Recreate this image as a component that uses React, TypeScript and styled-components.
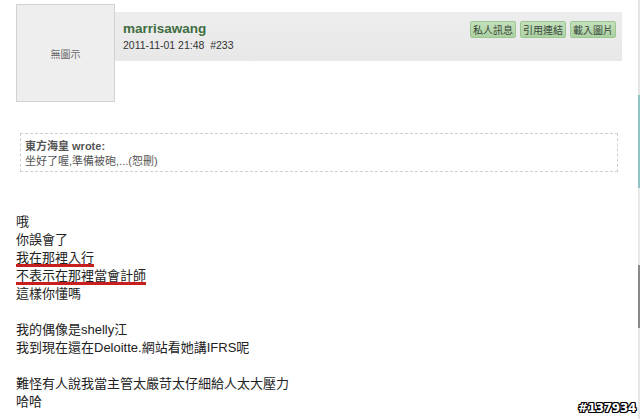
import React from 'react';
import styled, { createGlobalStyle } from 'styled-components';

const GlobalStyle = createGlobalStyle`
  html, body {
    margin: 0;
    padding: 0;
    background: #fff;
  }
  body {
    font-family: "Liberation Sans", "Noto Sans CJK TC", sans-serif;
    color: #222;
  }
`;

const Page = styled.div`
  position: relative;
  display: flex;
  width: 640px;
  height: 419px;
  overflow: hidden;
  background: #fff;
`;

const Content = styled.div`
  width: 638px;
  display: flex;
  flex-direction: column;
`;

const ScrollEdge = styled.div`
  width: 2px;
  background: linear-gradient(
    to bottom,
    #e4e4e4 0px,
    #e4e4e4 95px,
    #8fc4c4 95px,
    #8fc4c4 188px,
    #e8e8e8 188px,
    #e8e8e8 265px,
    #8a8a8a 265px,
    #8a8a8a 328px,
    #e6e6e6 328px
  );
`;

const PostHead = styled.div`
  display: flex;
  align-items: flex-start;
  padding: 4px 16px 0 16px;
`;

const Avatar = styled.div`
  width: 97px;
  height: 96px;
  border: 1px solid #d2d2d2;
  background: #eeeeee;
  display: flex;
  align-items: center;
  justify-content: center;
  font-size: 10px;
  color: #666;
  flex-shrink: 0;
`;

const InfoBar = styled.div`
  flex: 1;
  margin-top: 8px;
  height: 49px;
  box-sizing: border-box;
  padding: 8px 6px 0 8px;
  background: linear-gradient(to bottom, #ededed, #e8e8e8);
  display: flex;
  justify-content: space-between;
  align-items: flex-start;
`;

const Meta = styled.div`
  display: flex;
  flex-direction: column;
`;

const UserName = styled.div`
  font-size: 13.5px;
  font-weight: bold;
  line-height: 17px;
  color: #3e6d3e;
`;

const PostDate = styled.div`
  font-size: 10.5px;
  line-height: 16px;
  color: #333;
  white-space: pre;
`;

const Actions = styled.div`
  display: flex;
  gap: 4px;
  margin-top: 1px;
`;

const ActionButton = styled.span`
  display: inline-flex;
  align-items: center;
  height: 17px;
  padding: 0 2px;
  border: 1px solid #9cc592;
  border-radius: 2px;
  background: linear-gradient(to bottom, #c3e0bb, #acd1a2);
  color: #3a463a;
  font-size: 10px;
  box-sizing: border-box;
`;

const Quote = styled.div`
  margin: 31px 20px 0 20px;
  border: 1px dashed #cfcfcf;
  padding: 4px 4px 3px 4px;
  height: 39px;
  box-sizing: border-box;
`;

const QuoteAuthor = styled.div`
  font-size: 11px;
  font-weight: bold;
  line-height: 16px;
  color: #555;
`;

const QuoteText = styled.div`
  font-size: 11px;
  line-height: 15px;
  color: #555;
`;

const Body = styled.div`
  margin-top: 41px;
  padding-left: 16px;
  font-size: 13px;
  line-height: 18px;
  color: #222;
`;

const Line = styled.div`
  height: 18px;
  white-space: nowrap;
`;

const Marked = styled.span`
  text-decoration-line: underline;
  text-decoration-color: #c81e1e;
  text-decoration-thickness: 3px;
  text-underline-offset: 2px;
`;

const Watermark = styled.div`
  position: absolute;
  right: 4px;
  bottom: 4px;
  font-family: "DejaVu Sans", sans-serif;
  font-size: 12px;
  font-weight: bold;
  color: #fff;
  letter-spacing: -0.3px;
  text-shadow:
    -1px -1px 0 #000, 1px -1px 0 #000, -1px 1px 0 #000, 1px 1px 0 #000,
    0 -1px 0 #000, 0 1px 0 #000, -1px 0 0 #000, 1px 0 0 #000;
`;

const lines: { text: string; marked?: boolean }[] = [
  { text: '哦' },
  { text: '你誤會了' },
  { text: '我在那裡入行', marked: true },
  { text: '不表示在那裡當會計師', marked: true },
  { text: '這樣你懂嗎' },
  { text: '' },
  { text: '我的偶像是shelly江' },
  { text: '我到現在還在Deloitte.網站看她講IFRS呢' },
  { text: '' },
  { text: '難怪有人說我當主管太嚴苛太仔細給人太大壓力' },
  { text: '哈哈' },
];

const App: React.FC = () => {
  return (
    <Page>
      <GlobalStyle />
      <Content>
        <PostHead>
          <Avatar>無圖示</Avatar>
          <InfoBar>
            <Meta>
              <UserName>marrisawang</UserName>
              <PostDate>{'2011-11-01 21:48  #233'}</PostDate>
            </Meta>
            <Actions>
              <ActionButton>私人訊息</ActionButton>
              <ActionButton>引用連結</ActionButton>
              <ActionButton>載入圖片</ActionButton>
            </Actions>
          </InfoBar>
        </PostHead>

        <Quote>
          <QuoteAuthor>東方海皇 wrote:</QuoteAuthor>
          <QuoteText>坐好了喔,準備被砲,...(恕刪)</QuoteText>
        </Quote>

        <Body>
          {lines.map((l, i) => (
            <Line key={i}>
              {l.marked ? <Marked>{l.text}</Marked> : l.text}
            </Line>
          ))}
        </Body>
      </Content>
      <ScrollEdge />
      <Watermark>#137934</Watermark>
    </Page>
  );
};

export default App;
